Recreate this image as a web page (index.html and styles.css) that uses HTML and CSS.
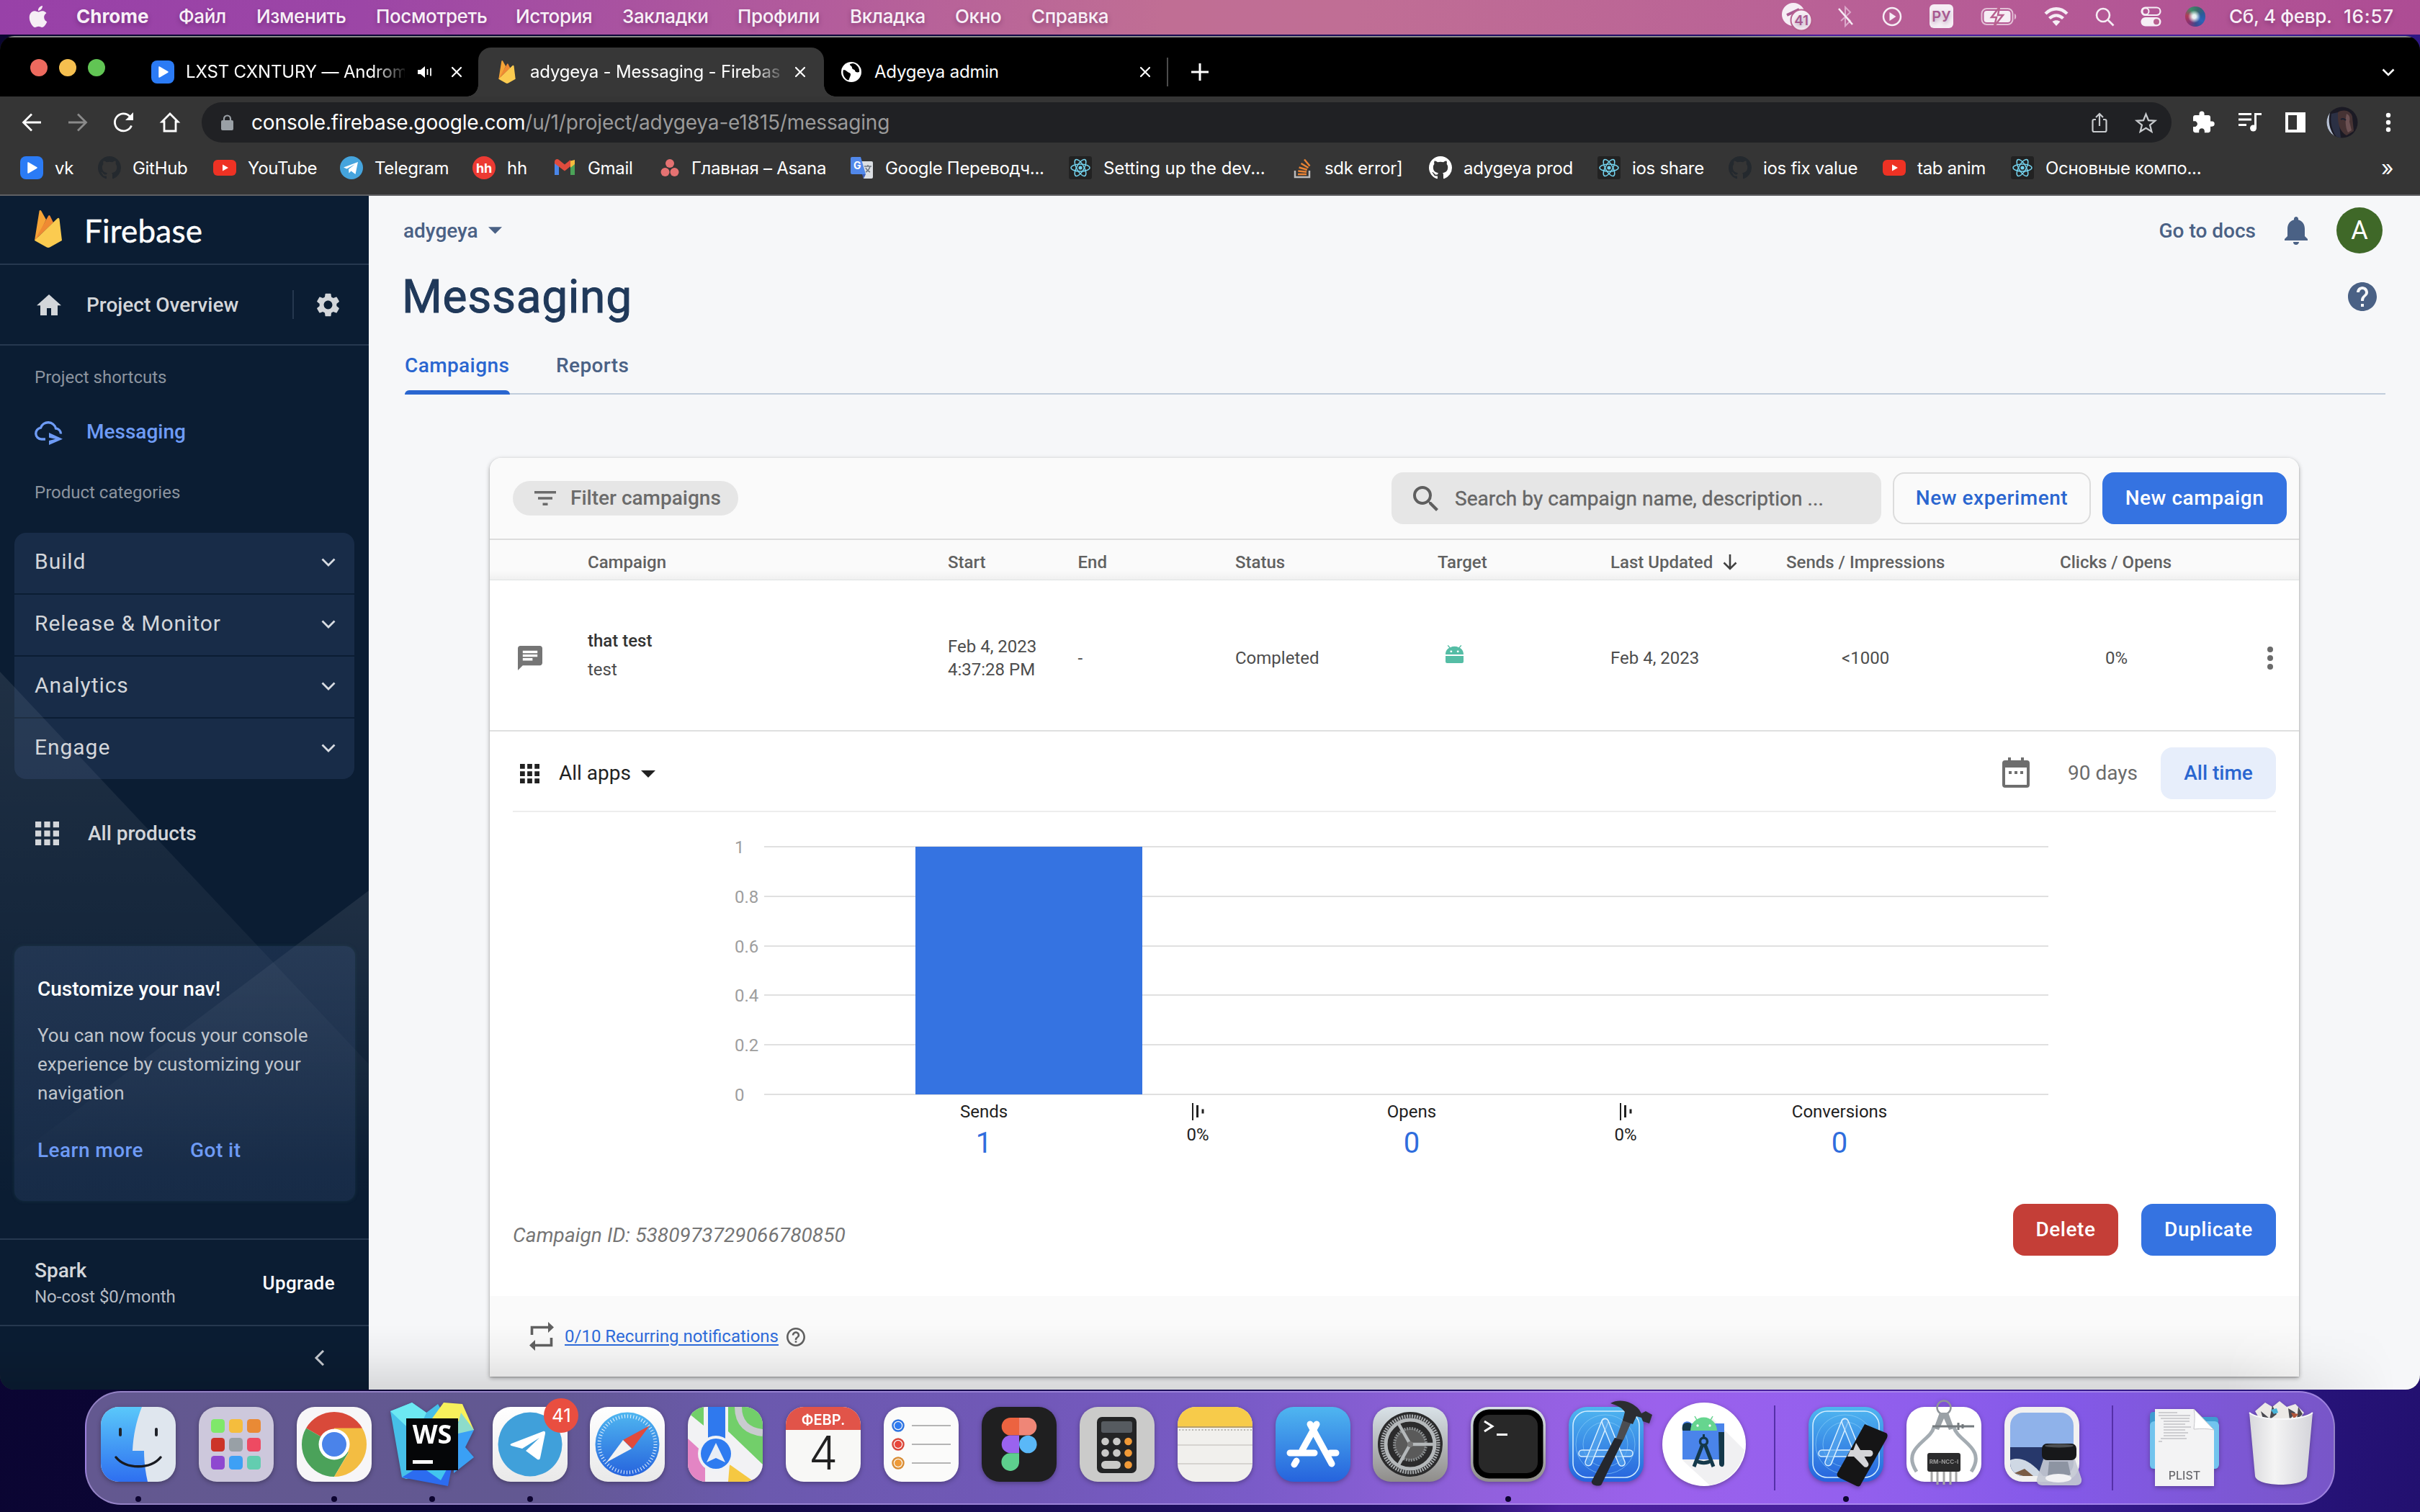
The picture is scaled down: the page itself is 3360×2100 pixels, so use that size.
FILE: index.html
```html
<!DOCTYPE html>
<html lang="ru">
<head>
<meta charset="utf-8">
<title>adygeya - Messaging - Firebase</title>
<link rel="stylesheet" href="styles.css">
</head>
<body>
<svg class="defs" aria-hidden="true">
  <defs>
    <symbol id="i-github" viewBox="0 0 16 16"><path d="M8 0C3.58 0 0 3.58 0 8c0 3.54 2.29 6.53 5.47 7.59.4.07.55-.17.55-.38 0-.19-.01-.82-.01-1.49-2.01.37-2.53-.49-2.69-.94-.09-.23-.48-.94-.82-1.13-.28-.15-.68-.52-.01-.53.63-.01 1.08.58 1.23.82.72 1.21 1.87.87 2.33.66.07-.52.28-.87.51-1.07-1.78-.2-3.64-.89-3.64-3.95 0-.87.31-1.59.82-2.15-.08-.2-.36-1.02.08-2.12 0 0 .67-.21 2.2.82.64-.18 1.32-.27 2-.27s1.36.09 2 .27c1.53-1.04 2.2-.82 2.2-.82.44 1.1.16 1.92.08 2.12.51.56.82 1.27.82 2.15 0 3.07-1.87 3.75-3.65 3.95.29.25.54.73.54 1.48 0 1.07-.01 1.93-.01 2.2 0 .21.15.46.55.38A8.01 8.01 0 0 0 16 8c0-4.42-3.58-8-8-8z"/></symbol>
    <symbol id="i-vk" viewBox="0 0 32 32"><rect width="32" height="32" rx="8" fill="#2b7bf5"/><path d="M11 9v14l12-7z" fill="#fff" stroke="#fff" stroke-width="1.5" stroke-linejoin="round"/></symbol>
    <symbol id="i-youtube" viewBox="0 0 32 32"><rect y="5" width="32" height="22" rx="6" fill="#ee3224"/><path d="M13 11.500v9l8-4.500z" fill="#fff"/></symbol>
    <symbol id="i-react" viewBox="0 0 32 32"><rect width="32" height="32" rx="3" fill="#222"/><g fill="none" stroke="#74d3ee" stroke-width="1.500"><ellipse cx="16" cy="16" rx="13" ry="5"/><ellipse cx="16" cy="16" rx="13" ry="5" transform="rotate(60 16 16)"/><ellipse cx="16" cy="16" rx="13" ry="5" transform="rotate(120 16 16)"/></g><circle cx="16" cy="16" r="2.600" fill="#74d3ee"/></symbol>
    <symbol id="i-firebase" viewBox="0 0 38 52"><path d="M0 42 6.500 1.500c.3-1.700 2-1.900 2.800-.5L16 13 3 41z" fill="#f6a437"/><path d="M0 42 19 8c.7-1.200 2-1.200 2.600 0L26 17z" fill="#ef8a33"/><path d="M0 42 31.500 11.500c1.300-1.200 2.800-.6 3 1L38 42 21.500 51.200c-1.600.9-3.400.9-5 0z" fill="#fbcb50"/></symbol>
    <symbol id="i-close" viewBox="0 0 16 16"><path d="m2 2 12 12M14 2 2 14" stroke="#fff" stroke-width="2.200" fill="none" stroke-linecap="round"/></symbol>
    <symbol id="i-chev" viewBox="0 0 20 12"><path d="m1.500 1.500 8.500 8.500 8.500-8.500" stroke="#d8dce2" stroke-width="2.800" fill="none"/></symbol>
    <symbol id="i-grid" viewBox="0 0 32 32"><path d="M0 0h8v8H0zm12 0h8v8h-8zm12 0h8v8h-8zM0 12h8v8H0zm12 0h8v8h-8zm12 0h8v8h-8zM0 24h8v8H0zm12 0h8v8h-8zm12 0h8v8h-8z"/></symbol>
    <symbol id="i-funnel" viewBox="0 0 17 24"><path d="M0 0h2v24H0zM6 3h3v17H6zM13.500 8.500h3v6h-3z" fill="#212121"/></symbol>
    <linearGradient id="g-blue" x1="0" y1="0" x2="0" y2="1"><stop offset="0" stop-color="#4fb6f0"/><stop offset="1" stop-color="#2663dd"/></linearGradient>
    <linearGradient id="g-sky" x1="0" y1="0" x2="0" y2="1"><stop offset="0" stop-color="#5ac8fa"/><stop offset="1" stop-color="#2e6ff0"/></linearGradient>
    <linearGradient id="g-white" x1="0" y1="0" x2="0" y2="1"><stop offset="0" stop-color="#fff"/><stop offset="1" stop-color="#e9e9e9"/></linearGradient>
    <linearGradient id="g-gray" x1="0" y1="0" x2="0" y2="1"><stop offset="0" stop-color="#d9e2e8"/><stop offset="1" stop-color="#8f8d8a"/></linearGradient>
    <linearGradient id="g-trash" x1="0" y1="0" x2="1" y2="0"><stop offset="0" stop-color="#d8d8dc"/><stop offset=".4" stop-color="#f4f4f4"/><stop offset="1" stop-color="#d4d4da"/></linearGradient>
    <clipPath id="c-app"><rect width="104" height="104" rx="25"/></clipPath>
    <symbol id="i-xbase" viewBox="0 0 104 104"><rect width="104" height="104" rx="25" fill="url(#g-blue)"/><rect x="6" y="6" width="92" height="92" rx="20" fill="none" stroke="#d3eeff" stroke-width="1.500"/><circle cx="51" cy="52" r="41" fill="none" stroke="#8fd0f8" stroke-width="1" opacity=".6"/><circle cx="51" cy="52" r="31" fill="none" stroke="#8fd0f8" stroke-width="1" opacity=".6"/><g fill="#5aa9ee" fill-opacity=".6" stroke="#d9efff" stroke-width="1.500"><rect x="14" y="60" width="75" height="9" rx="4.500"/><rect x="46" y="16" width="9" height="70" rx="4.500" transform="rotate(22 50 20)"/><rect x="46" y="16" width="9" height="70" rx="4.500" transform="rotate(-22 52 20)"/></g></symbol>
  </defs>
</svg>

<header class="menubar">
  <nav class="menus">
    <svg class="apple" viewBox="0 0 24 24"><path fill="#f6eef5" d="M12.152 6.896c-.948 0-2.415-1.078-3.960-1.040-2.040.027-3.910 1.183-4.961 3.014-2.117 3.675-.546 9.103 1.519 12.090 1.013 1.454 2.208 3.090 3.792 3.039 1.520-.065 2.090-.987 3.935-.987 1.831 0 2.350.987 3.960.948 1.637-.026 2.676-1.480 3.676-2.948 1.156-1.688 1.636-3.325 1.662-3.415-.039-.013-3.182-1.221-3.220-4.857-.026-3.040 2.480-4.494 2.597-4.559-1.429-2.090-3.623-2.324-4.390-2.376-2-.156-3.675 1.090-4.610 1.090zM15.530 3.830c.843-1.012 1.400-2.427 1.245-3.830-1.207.052-2.662.805-3.532 1.818-.780.896-1.454 2.338-1.273 3.714 1.338.104 2.715-.688 3.559-1.701"/></svg>
    <b>Chrome</b><span>Файл</span><span>Изменить</span><span>Посмотреть</span><span>История</span><span>Закладки</span><span>Профили</span><span>Вкладка</span><span>Окно</span><span>Справка</span>
  </nav>
  <div class="status">
    <svg width="42" height="38" viewBox="0 0 42 38"><circle cx="16" cy="16" r="16" fill="#f6eef5"/><path d="M7 17 24 9" stroke="#a85a91" stroke-width="4"/><circle cx="27" cy="24" r="14.500" fill="#f6eef5" stroke="#b8608f" stroke-width="2"/><text x="27" y="31" text-anchor="middle" class="tray">41</text></svg>
    <svg width="22" height="30" viewBox="0 0 22 30" fill="none"><path d="m4 8 13 13-7 7V2l7 7L4 21" stroke="#dba8ca" stroke-width="2"/><path d="m1 4 19 22" stroke="#f6eef5" stroke-width="2.500"/></svg>
    <svg width="28" height="28" viewBox="0 0 28 28"><circle cx="14" cy="14" r="12" fill="none" stroke="#f6eef5" stroke-width="2.500"/><path d="M10.500 8v12l9-6z" fill="#f6eef5"/></svg>
    <svg width="34" height="34" viewBox="0 0 34 34"><rect width="33" height="33" rx="6" fill="#f6eef5"/><text x="16.500" y="24" text-anchor="middle" class="lang">РУ</text></svg>
    <svg width="52" height="26" viewBox="0 0 52 26"><rect x="1.500" y="2" width="43" height="22" rx="7" fill="none" stroke="#e3bfd6" stroke-width="2"/><rect x="4.500" y="5" width="37" height="16" rx="4" fill="#f6eef5"/><path d="M47 9c3 1 3 7 0 8z" fill="#e3bfd6"/><path d="m26 0-11 14h7l-3 12 12-15h-7z" fill="#f6eef5" stroke="#b8608f" stroke-width="2.500"/></svg>
    <svg width="34" height="26" viewBox="0 0 34 26" fill="none" stroke="#f6eef5" stroke-width="4.400"><path d="M2 9c9-9 21-9 30 0M7.500 15.500c6-5.500 13-5.500 19 0"/><path d="m17 26-5.500-6c3-2.500 8-2.500 11 0z" fill="#f6eef5" stroke="none"/></svg>
    <svg width="27" height="27" viewBox="0 0 27 27" fill="none" stroke="#f6eef5" stroke-width="2.600"><circle cx="11" cy="11" r="9"/><path d="m17.500 17.500 8 8"/></svg>
    <svg width="30" height="28" viewBox="0 0 30 28"><rect x="1.500" y="1.500" width="26" height="10.500" rx="5.200" fill="none" stroke="#f6eef5" stroke-width="2.200"/><circle cx="7" cy="6.700" r="4.500" fill="none" stroke="#f6eef5" stroke-width="2"/><rect x=".5" y="15" width="28" height="12.500" rx="6.200" fill="#f6eef5"/><circle cx="22" cy="21.200" r="4" fill="#b8608f"/></svg>
    <span class="siri"></span>
    <span class="date">Сб, 4 февр.</span><span>16:57</span>
  </div>
</header>

<div class="window">
  <div class="tabstrip">
    <div class="lights"><i class="red"></i><i class="yellow"></i><i class="green"></i></div>
    <div class="tab tab-a">
      <svg class="fav"><use href="#i-vk"/></svg><span class="tt">LXST CXNTURY — Androm</span>
      <svg class="spk" viewBox="0 0 20 16"><path d="M0 5h4l6-5v16l-6-5H0z" fill="#fff"/><path d="M13.500 4v8M18 2.500v11" stroke="#fff" stroke-width="1.800"/></svg>
      <svg class="x"><use href="#i-close"/></svg>
    </div>
    <div class="tab tab-b active">
      <svg class="fav"><use href="#i-firebase"/></svg><span class="tt">adygeya - Messaging - Firebas</span>
      <svg class="x"><use href="#i-close"/></svg>
    </div>
    <div class="tab tab-c">
      <svg class="fav" viewBox="0 0 28 28"><circle cx="14" cy="14" r="14" fill="#fff"/><path d="M3 11c4 0 5 3 8 4 3 1 2 4 1 6-1 2-1 4-2 4.500C5 24 1 17 3 11zM12 3c0 3 3 2 3 5s4 2 4 4 3 3 6 2c1-5-3-11-9-12z" fill="#000"/></svg><span class="tt">Adygeya admin</span>
      <svg class="x"><use href="#i-close"/></svg>
    </div>
    <span class="tsep"></span>
    <svg class="plus" viewBox="0 0 26 26"><path d="M13 1v24M1 13h24" stroke="#fff" stroke-width="3"/></svg>
    <svg class="tdown" viewBox="0 0 18 11"><path d="m1.500 1.500 7.500 7.500 7.500-7.500" stroke="#fff" stroke-width="2.600" fill="none"/></svg>
  </div>

  <div class="toolbar">
    <svg width="28" height="26" viewBox="0 0 28 26" fill="none" stroke="#fff" stroke-width="2.800"><path d="M27 13H3M14 1.500 2.500 13 14 24.500"/></svg>
    <svg width="28" height="26" viewBox="0 0 28 26" fill="none" stroke="#8a8a8a" stroke-width="2.800"><path d="M1 13h24M14 1.500 25.500 13 14 24.500"/></svg>
    <svg width="30" height="28" viewBox="0 0 30 28" fill="none"><path d="M25.500 18.500A12 12 0 1 1 23 5.500" stroke="#fff" stroke-width="2.800"/><path d="M28 0v11H17z" fill="#fff"/></svg>
    <svg width="28" height="28" viewBox="0 0 28 28" fill="none" stroke="#fff" stroke-width="2.800"><path d="M14 2 3 13h3v13h16V13h3z"/></svg>
    <div class="omnibox">
      <svg class="lock" viewBox="0 0 18 22"><rect y="8" width="17" height="14" rx="2" fill="#9aa0a6"/><path d="M4 9V6a4.500 4.500 0 0 1 9 0v3" fill="none" stroke="#9aa0a6" stroke-width="2.200"/></svg>
      <span class="url">console.firebase.google.com<em>/u/1/project/adygeya-e1815/messaging</em></span>
      <svg class="share" viewBox="0 0 22 28" fill="none" stroke="#c8cbce" stroke-width="2.200"><path d="M6 10H3.500A2 2 0 0 0 1.500 12v13a2 2 0 0 0 2 2h15a2 2 0 0 0 2-2V12a2 2 0 0 0-2-2H16M11 19V2M6 7l5-5 5 5"/></svg>
      <svg class="star" viewBox="0 0 28 28"><path d="m14 2.500 3.400 8.300 8.900.6-6.900 5.700 2.200 8.700L14 21l-7.600 4.800 2.200-8.700-6.900-5.700 8.900-.6z" fill="none" stroke="#c8cbce" stroke-width="2.200"/></svg>
    </div>
    <svg class="t-puz" viewBox="2 1.500 20.500 21"><path fill="#fff" d="M20.500 11H19V7c0-1.100-.9-2-2-2h-4V3.500a2.500 2.500 0 0 0-5 0V5H4c-1.100 0-1.990.9-1.990 2v3.800H3.500c1.490 0 2.700 1.210 2.700 2.700s-1.210 2.700-2.700 2.700H2V20c0 1.100.9 2 2 2h3.800v-1.500c0-1.490 1.210-2.700 2.700-2.700s2.700 1.210 2.700 2.700V22H17c1.100 0 2-.9 2-2v-4h1.500a2.500 2.500 0 0 0 0-5z"/></svg>
    <svg class="t-list" viewBox="0 0 32 26"><path d="M0 1.500h18M0 9h18M0 16.500h11" stroke="#fff" stroke-width="3"/><path d="M23.500 21V1.500H32" fill="none" stroke="#fff" stroke-width="3"/><circle cx="20.500" cy="21" r="4.500" fill="#fff"/></svg>
    <svg class="t-side" viewBox="0 0 28 28"><path d="M0 0h28v28H0zm4 4v20h12V4z" fill="#fff" fill-rule="evenodd"/></svg>
    <svg class="t-ava" viewBox="0 0 44 44"><defs><clipPath id="c-ava"><circle cx="22" cy="22" r="21.500"/></clipPath></defs><g clip-path="url(#c-ava)"><path d="M0 0h44v44H0z" fill="#1b1a24"/><path d="M5 8C2 20 4 32 12 42L0 44V8z" fill="#b8c2d4"/><path d="M7 10c-2 10 0 22 7 32l6 2L16 8z" fill="#2b3044"/><path d="M16 8c8-5 18-2 20 6l2 20-10 6c-8-4-13-14-12-32z" fill="#463334"/><path d="M28 10c5 2 5 7 4 11l3 12-5 3c-4-8-4-18-2-26z" fill="#6d5254"/><path d="M20 18c3-2 5-1 7 1" stroke="#1c2030" stroke-width="2" fill="none"/></g></svg>
    <svg class="t-dots" viewBox="0 0 8 28" fill="#fff"><circle cx="4" cy="4" r="3.200"/><circle cx="4" cy="14" r="3.200"/><circle cx="4" cy="24" r="3.200"/></svg>
  </div>

  <div class="bookmarks">
    <span><svg><use href="#i-vk"/></svg>vk</span>
    <span><svg fill="#24292e"><use href="#i-github"/></svg>GitHub</span>
    <span><svg><use href="#i-youtube"/></svg>YouTube</span>
    <span><svg viewBox="0 0 32 32"><circle cx="16" cy="16" r="16" fill="#45a4dd"/><path d="M5 15.500 25 8l-3.500 17-6-4.500-3 3-.5-5.500L21 11 9.500 17.500z" fill="#fff"/></svg>Telegram</span>
    <span><svg viewBox="0 0 32 32"><circle cx="16" cy="16" r="16" fill="#ec3a33"/><text x="16" y="22.500" text-anchor="middle" class="hh">hh</text></svg>hh</span>
    <span><svg viewBox="0 0 32 32"><path d="M2 8v18h6V14z" fill="#4a86e8"/><path d="M30 8v18h-6V14z" fill="#4ba358"/><path d="M24 6.500 30 5v6l-6 5z" fill="#f4bb3e"/><path d="M2 8c0-4 4-5 6-3l8 6.500L24 5v9l-8 6.500L2 10z" fill="#df4b3d"/></svg>Gmail</span>
    <span><svg viewBox="0 0 32 32" fill="#e57272"><circle cx="14" cy="10" r="6"/><circle cx="7.500" cy="22" r="6"/><circle cx="20.500" cy="22" r="6"/></svg>Главная – Asana</span>
    <span><svg viewBox="0 0 32 32"><path d="M12 7h17a2 2 0 0 1 2 2v20a2 2 0 0 1-2 2H18z" fill="#dcdfe3"/><path d="M2 1h12l7 24H2a2 2 0 0 1-2-2V3a2 2 0 0 1 2-2z" fill="#5188ea"/><path d="m16 25 5 0-3 6z" fill="#3a5bb5"/><path d="M19 14h10M24 12v2M27 14c-1 4-4 7-6 8M21 16c1 3 4 5 6 6" stroke="#6d7680" stroke-width="1.500" fill="none"/><text x="9" y="18" text-anchor="middle" class="gt">G</text></svg>Google Переводч...</span>
    <span class="setup"><svg><use href="#i-react"/></svg>Setting up the dev...</span>
    <span><svg viewBox="0 0 32 32" fill="none"><path d="M2 20v9h20v-9" stroke="#bcbbbb" stroke-width="2.500"/><g stroke="#e98334" stroke-width="2.500"><path d="M6 25h12M6.300 20.500l11.800 1.200M7.600 15.500l11.200 3.300M10.500 10l10 6M15 4.500l7.500 9"/></g></svg>sdk error]</span>
    <span><svg fill="#fff"><use href="#i-github"/></svg>adygeya prod</span>
    <span><svg><use href="#i-react"/></svg>ios share</span>
    <span><svg fill="#24292e"><use href="#i-github"/></svg>ios fix value</span>
    <span><svg><use href="#i-youtube"/></svg>tab anim</span>
    <span><svg><use href="#i-react"/></svg>Основные компо...</span>
    <span class="more">»</span>
  </div>

  <div class="page">
    <aside class="sidebar">
      <svg class="facets" viewBox="0 0 512 1658" preserveAspectRatio="none"><defs><linearGradient id="g-f1" x1="0" y1="0" x2="0" y2="1"><stop offset="0" stop-color="#fff" stop-opacity=".085"/><stop offset="1" stop-color="#fff" stop-opacity="0"/></linearGradient></defs><path d="M0 661 512 1206V1400H0z" fill="url(#g-f1)"/><path d="M512 965V1350H0z" fill="url(#g-f1)"/></svg>
      <div class="brand"><svg class="flame"><use href="#i-firebase"/></svg><span>Firebase</span></div>
      <div class="overview">
        <svg class="home" viewBox="0 0 34 29"><path d="M17 0 0 15.300h5V29h9V19h6v10h9V15.300h5z" fill="#d3d6da"/></svg>
        <span>Project Overview</span>
        <i></i>
        <svg class="gear" viewBox="2 2 20 20"><path fill="#d3d6da" d="M19.140 12.940c.04-.3.060-.61.060-.94 0-.32-.02-.64-.07-.94l2.030-1.580a.49.49 0 0 0 .12-.61l-1.920-3.320a.488.488 0 0 0-.59-.22l-2.390.96c-.5-.38-1.030-.7-1.620-.94l-.36-2.540a.484.484 0 0 0-.48-.41h-3.840c-.24 0-.43.17-.47.41l-.36 2.540c-.59.24-1.130.57-1.620.94l-2.390-.96c-.22-.08-.47 0-.59.22L2.740 8.870c-.12.21-.08.47.12.61l2.030 1.580c-.05.3-.09.63-.09.94s.02.64.07.94l-2.030 1.580a.49.49 0 0 0-.12.61l1.920 3.320c.12.22.37.29.59.22l2.390-.96c.5.38 1.030.7 1.620.94l.36 2.540c.05.24.24.41.48.41h3.840c.24 0 .44-.17.47-.41l.36-2.540c.59-.24 1.130-.56 1.620-.94l2.390.96c.22.08.47 0 .59-.22l1.920-3.320c.12-.22.070-.47-.12-.61l-2.010-1.580zM12 15.600A3.610 3.610 0 0 1 8.400 12c0-1.980 1.620-3.600 3.600-3.600s3.600 1.620 3.600 3.600-1.620 3.600-3.600 3.600z"/></svg>
      </div>
      <div class="label l1">Project shortcuts</div>
      <div class="shortcut">
        <svg viewBox="0 0 40 34"><path d="M15 25H9.500a8 8 0 0 1-1-15.900A11 11 0 0 1 29.500 10a8 8 0 0 1 7 7.500" fill="none" stroke="#6e9bf5" stroke-width="3.400"/><path d="m20 16 19 8.800L20 33v-6l9-2.200-9-2z" fill="#6e9bf5"/></svg>
        <span>Messaging</span>
      </div>
      <div class="label l2">Product categories</div>
      <div class="group">
        <div>Build<svg><use href="#i-chev"/></svg></div>
        <div>Release &amp; Monitor<svg><use href="#i-chev"/></svg></div>
        <div>Analytics<svg><use href="#i-chev"/></svg></div>
        <div>Engage<svg><use href="#i-chev"/></svg></div>
      </div>
      <div class="allprod"><svg fill="#d3d6da"><use href="#i-grid"/></svg>All products</div>
      <section class="promo">
        <h3>Customize your nav!</h3>
        <p>You can now focus your console experience by customizing your navigation</p>
        <div><a>Learn more</a><a>Got it</a></div>
      </section>
      <div class="plan"><div><b>Spark</b><span>No-cost $0/month</span></div><strong>Upgrade</strong></div>
      <div class="collapse"><svg viewBox="0 0 15 24"><path d="M13 2 3 12l10 10" fill="none" stroke="#c8ccd2" stroke-width="3"/></svg></div>
    </aside>

    <main class="main">
      <div class="top">
        <span class="proj">adygeya</span><svg class="caret" viewBox="0 0 20 10"><path d="M0 0h20L10 10z" fill="#4a6185"/></svg>
        <span class="docs">Go to docs</span>
        <svg class="bell" viewBox="4 2.500 16 19.500"><path fill="#4a6185" d="M12 22c1.100 0 2-.9 2-2h-4a2 2 0 0 0 2 2zm6-6v-5c0-3.070-1.640-5.640-4.500-6.320V4c0-.83-.67-1.500-1.500-1.500s-1.500.67-1.500 1.500v.68C7.630 5.360 6 7.920 6 11v5l-2 2v1h16v-1z"/></svg>
        <span class="avatar">A</span>
      </div>
      <div class="titlerow"><h1>Messaging</h1><svg class="help" viewBox="2 2 20 20"><path fill="#4a6185" d="M12 2C6.480 2 2 6.480 2 12s4.480 10 10 10 10-4.480 10-10S17.520 2 12 2zm1 17h-2v-2h2v2zm2.070-7.750-.9.920C13.450 12.900 13 13.500 13 15h-2v-.5c0-1.100.45-2.100 1.170-2.830l1.240-1.260c.37-.36.59-.86.59-1.410 0-1.100-.9-2-2-2s-2 .9-2 2H8c0-2.210 1.790-4 4-4s4 1.790 4 4c0 .88-.36 1.680-.93 2.250z"/></svg></div>
      <div class="tabs"><span class="on">Campaigns</span><span>Reports</span></div>

      <section class="card">
        <div class="cardbar">
          <span class="chip"><svg viewBox="0 0 30 20" fill="#6b6b6b"><path d="M0 0h30v3.400H0zM5 8.300h20v3.400H5zM11.500 16.600h7V20h-7z"/></svg>Filter campaigns</span>
          <span class="search"><svg viewBox="3 3 17.500 17.500"><path fill="#5f5f5f" d="M15.500 14h-.79l-.28-.27A6.471 6.471 0 0 0 16 9.500 6.500 6.500 0 1 0 9.500 16c1.610 0 3.090-.59 4.230-1.570l.27.28v.79l5 4.990L20.490 19l-4.990-5zm-6 0C7.010 14 5 11.990 5 9.500S7.010 5 9.500 5 14 7.010 14 9.500 11.990 14 9.500 14z"/></svg>Search by campaign name, description ...</span>
          <span class="btn outline">New experiment</span><span class="btn blue">New campaign</span>
        </div>
        <div class="row head">
          <span></span><span>Campaign</span><span>Start</span><span>End</span><span>Status</span><span>Target</span>
          <span class="sorted">Last Updated<svg viewBox="0 0 20 22" fill="none" stroke="#424242" stroke-width="2.600"><path d="M10 0v20M1.500 11.500 10 20l8.500-8.500"/></svg></span>
          <span>Sends / Impressions</span><span>Clicks / Opens</span>
        </div>
        <div class="row item">
          <span class="msg"><svg viewBox="2 2 20 20"><path fill="#757575" d="M20 2H4c-1.100 0-1.990.9-1.990 2L2 22l4-4h14c1.100 0 2-.9 2-2V4c0-1.100-.9-2-2-2zM6 9h12v2H6V9zm8 5H6v-2h8v2zm4-6H6V6h12v2z"/></svg></span>
          <span class="name"><b>that test</b>test</span>
          <span class="when">Feb 4, 2023<br>4:37:28 PM</span>
          <span>-</span><span>Completed</span>
          <span class="android"><svg viewBox="0 0 24 24"><path fill="#55bda5" d="M0 14.500h24V22a2 2 0 0 1-2 2H2a2 2 0 0 1-2-2zM0 12.500C0 8 2 5.300 5 3.700L2.500.8 3.700 0l2.600 3a13 13 0 0 1 11.400 0L20.300 0l1.200.8L19 3.700c3 1.600 5 4.300 5 8.800z"/><circle cx="7.500" cy="8.500" r="1.400" fill="#fff"/><circle cx="16.500" cy="8.500" r="1.400" fill="#fff"/></svg></span>
          <span>Feb 4, 2023</span><span class="imp">&lt;1000</span><span class="clk">0%</span>
          <span class="keb"><svg viewBox="0 0 8 32" fill="#6b6b6b"><circle cx="4" cy="4" r="4"/><circle cx="4" cy="16" r="4"/><circle cx="4" cy="28" r="4"/></svg></span>
        </div>
        <div class="details">
          <div class="apps">
            <svg class="g" fill="#212121"><use href="#i-grid"/></svg><span>All apps</span><svg class="dd" viewBox="0 0 20 10"><path d="M0 0h20L10 10z" fill="#212121"/></svg>
            <svg class="cal" viewBox="0 0 38 42"><path d="M8 0h4v4h14V0h4v4h4a4 4 0 0 1 4 4v30a4 4 0 0 1-4 4H4a4 4 0 0 1-4-4V8a4 4 0 0 1 4-4h4zM4 14v24h30V14zm5 5h4v4H9zm8 0h4v4h-4zm8 0h4v4h-4z" fill="#6e6e6e" fill-rule="evenodd"/></svg>
            <span class="d90">90 days</span><span class="all">All time</span>
          </div>
          <svg class="chart" viewBox="0 0 2448 500">
            <g stroke="#e0e0e0" stroke-width="2"><path d="M349 48h1783M349 117h1783M349 186h1783M349 254h1783M349 323h1783M349 392h1783"/></g>
            <rect x="559" y="48" width="315" height="344" fill="#3573e1"/>
            <g class="axis"><text x="308" y="56.500">1</text><text x="308" y="125.500">0.8</text><text x="308" y="194.500">0.6</text><text x="308" y="262.500">0.4</text><text x="308" y="331.500">0.2</text><text x="308" y="400.500">0</text></g>
            <g class="cat"><text x="654" y="424">Sends</text><text x="1248" y="424">Opens</text><text x="1842" y="424">Conversions</text><text x="951" y="456">0%</text><text x="1545" y="456">0%</text></g>
            <g class="num"><text x="654" y="473">1</text><text x="1248" y="473">0</text><text x="1842" y="473">0</text></g>
            <use href="#i-funnel" x="943" y="404" width="17" height="24"/><use href="#i-funnel" x="1537" y="404" width="17" height="24"/>
          </svg>
          <div class="actions"><i>Campaign ID: 5380973729066780850</i><span class="btn red">Delete</span><span class="btn blue">Duplicate</span></div>
        </div>
        <div class="foot">
          <svg class="rep" viewBox="0 0 34 40" fill="none"><path d="M3.500 18V7.500H28M30.500 22v10.500H6" stroke="#616161" stroke-width="3.600"/><path d="m26 0 8 7.500-8 7.500zM8 25l-8 7.500L8 40z" fill="#616161"/></svg>
          <u>0/10 Recurring notifications</u>
          <svg class="q" viewBox="2 2 20 20"><path fill="#616161" d="M11 18h2v-2h-2v2zm1-16C6.480 2 2 6.480 2 12s4.480 10 10 10 10-4.480 10-10S17.520 2 12 2zm0 18c-4.410 0-8-3.590-8-8s3.590-8 8-8 8 3.590 8 8-3.590 8-8 8zm0-14c-2.210 0-4 1.790-4 4h2c0-1.100.9-2 2-2s2 .9 2 2c0 2-3 1.750-3 5h2c0-2.250 3-2.500 3-5 0-2.210-1.790-4-4-4z"/></svg>
        </div>
      </section>
    </main>
  </div>
  <div class="shade"></div>
</div>

<footer class="dock">
  <div class="slot run"><svg viewBox="0 0 104 104"><g clip-path="url(#c-app)"><path d="M0 0h104v104H0z" fill="#dfe6ee"/><path d="M0 0h57c-8 20-12 40-13 61h16c0 15 2 30 5 43H0z" fill="url(#g-sky)"/></g><path d="M27 31v8M77 31v8" stroke="#20232a" stroke-width="4" stroke-linecap="round"/><path d="M21 70c14 17 48 17 62 0" stroke="#181a20" stroke-width="3.500" fill="none" stroke-linecap="round"/></svg></div>
  <div class="slot"><svg viewBox="0 0 104 104"><rect width="104" height="104" rx="25" fill="#cdc8dc"/><g><rect x="17" y="17" width="19" height="19" rx="4.500" fill="#7fe86a"/><rect x="42" y="17" width="19" height="19" rx="4.500" fill="#f5bd3d"/><rect x="67" y="17" width="19" height="19" rx="4.500" fill="#e98a35"/><rect x="17" y="43" width="19" height="19" rx="4.500" fill="#cc3328"/><rect x="42" y="43" width="19" height="19" rx="4.500" fill="#98a0a6"/><rect x="67" y="43" width="19" height="19" rx="4.500" fill="#ee4a62"/><rect x="17" y="68" width="19" height="19" rx="4.500" fill="#8e48d0"/><rect x="42" y="68" width="19" height="19" rx="4.500" fill="#3da0f5"/><rect x="67" y="68" width="19" height="19" rx="4.500" fill="#63cdb0"/></g></svg></div>
  <div class="slot run"><svg viewBox="0 0 104 104"><rect width="104" height="104" rx="25" fill="#f7f6f8"/><path d="M52 52 13 29.500A45 45 0 0 1 91 29.500z" fill="#d9493a"/><path d="M52 52 13 29.500A45 45 0 0 0 52 97L72 63z" fill="#4ba25a"/><path d="M52 52l20 11.500L52 97a45 45 0 0 0 39-67.500H52z" fill="#f3bd42"/><circle cx="52" cy="52" r="21.500" fill="#fff"/><circle cx="52" cy="52" r="17" fill="#4a83ea"/></svg></div>
  <div class="slot run"><svg viewBox="0 0 104 104"><path d="M-6 6 24-6 44 8 60-4 74 20 70 90 16 100 10 98z" fill="#46bfe8"/><path d="M24-6 44 8 30 40-6 6z" fill="#6ce8f2"/><path d="M68-6 94-4l16 36-60 12L52 16z" fill="#f7f05c"/><path d="m84 18 26 14-12 24 12 14-28 22V40z" fill="#3aa0f5"/><path d="m92 8 18 24-26 6z" fill="#8ddccb"/><path d="M10 98 32 84l50-14-8 40z" fill="#2c6cf0"/><path d="m44 88 34-12-14 26z" fill="#42c5ee"/><path d="M16 16h72v72H16z" fill="#050608"/><text x="52" y="51" text-anchor="middle" class="ws">WS</text><path d="M25 74h28v5H25z" fill="#fff"/></svg></div>
  <div class="slot run"><svg viewBox="0 0 104 104"><rect width="104" height="104" rx="25" fill="url(#g-white)"/><circle cx="52" cy="52" r="44.500" fill="#40a0da"/><path d="M26 51 70 34c2-.8 3.500.4 3 3l-7 34c-.5 2.500-2.500 3-4.500 1.500L46 61 65 43 41 58 26 54c-2-.7-2-2.200 0-3z" fill="#fff"/></svg><b class="badge">41</b></div>
  <div class="slot"><svg viewBox="0 0 104 104"><rect width="104" height="104" rx="25" fill="url(#g-white)"/><circle cx="52" cy="52" r="44.500" fill="url(#g-blue)"/><circle cx="52" cy="52" r="39" fill="none" stroke="#e9f4fd" stroke-width="5" stroke-dasharray="1 3.080"/><path d="M83 26 59 58 46 46z" fill="#e04a3c"/><path d="M23 77 46 46l12 12z" fill="#f3f3f3"/></svg></div>
  <div class="slot"><svg viewBox="0 0 104 104"><g clip-path="url(#c-app)"><path d="M0 0h104v104H0z" fill="#f2f2f4"/><path d="M0 0h22v26L0 8zM56 0h48v80L56 34z" fill="#72cf6a"/><path d="M0 44l24 22v38H0z" fill="#e385c4"/><path d="M58 80l34 24H56z" fill="#f5c842"/><path d="M28 0h24v60H28z" fill="#2f79ee"/><path d="M70 0c0 24 14 34 34 36" fill="none" stroke="#c9cbcf" stroke-width="10"/></g><circle cx="39" cy="65" r="25" fill="#f0f2f6"/><circle cx="39" cy="65" r="21" fill="#2e7bf0"/><path d="M39 50 52 77l-13-6-13 6z" fill="#e8eef6"/></svg></div>
  <div class="slot"><svg viewBox="0 0 104 104"><g clip-path="url(#c-app)"><path d="M0 0h104v104H0z" fill="#f8f8f6"/><path d="M0 0h104v32H0z" fill="#e15449"/></g><text x="52" y="25" text-anchor="middle" class="cal-m">ФЕВР.</text><text x="52" y="87" text-anchor="middle" class="cal-d">4</text></svg></div>
  <div class="slot"><svg viewBox="0 0 104 104"><rect width="104" height="104" rx="25" fill="#fbfbfa"/><g fill="none" stroke-width="2.500"><circle cx="20" cy="26" r="7.500" stroke="#2f74e0"/><circle cx="20" cy="52" r="7.500" stroke="#d9473a"/><circle cx="20" cy="78" r="7.500" stroke="#d98d35"/></g><circle cx="20" cy="26" r="5" fill="#2f7bf0"/><circle cx="20" cy="52" r="5" fill="#e8463a"/><circle cx="20" cy="78" r="5" fill="#ee9a38"/><path d="M39 26h54M39 52h54M39 78h54" stroke="#b4b4b4" stroke-width="2"/></svg></div>
  <div class="slot"><svg viewBox="0 0 104 104"><rect width="104" height="104" rx="25" fill="#1f1f20"/><path d="M52 15H40a12.300 12.300 0 0 0 0 24.600h12z" fill="#ec6340"/><path d="M52 15h12a12.300 12.300 0 0 1 0 24.600H52z" fill="#ef8677"/><path d="M52 39.600H40a12.300 12.300 0 0 0 0 24.600h12z" fill="#9a63ef"/><circle cx="64.300" cy="52" r="12.300" fill="#5ab8f8"/><path d="M52 64.300H40A12.300 12.300 0 1 0 52 77z" fill="#5dcf8d"/></svg></div>
  <div class="slot"><svg viewBox="0 0 104 104"><rect width="104" height="104" rx="25" fill="#cbcbca"/><rect x="24" y="14" width="55" height="78" rx="7" fill="#232425"/><rect x="30" y="20" width="43" height="16" rx="3" fill="#565b60"/><g fill="#c9c9c7"><circle cx="35.500" cy="48" r="5.300"/><circle cx="51.500" cy="48" r="5.300"/><circle cx="35.500" cy="64" r="5.300"/><circle cx="51.500" cy="64" r="5.300"/><rect x="30" y="75" width="27" height="11" rx="5.500"/></g><g fill="#f19a37"><circle cx="67.500" cy="48" r="5.300"/><circle cx="67.500" cy="64" r="5.300"/><circle cx="67.500" cy="80.500" r="5.300"/></g></svg></div>
  <div class="slot"><svg viewBox="0 0 104 104"><g clip-path="url(#c-app)"><path d="M0 0h104v104H0z" fill="#f1f0ed"/><path d="M0 0h104v27H0z" fill="#f7cb4a"/><path d="M0 27h104v2H0z" fill="#b8a06a"/><path d="M2 32h102" stroke="#b8b6b0" stroke-width="2" stroke-dasharray="2 2.500"/><path d="M0 53h104M0 79h104" stroke="#d6d4d0" stroke-width="2"/></g></svg></div>
  <div class="slot"><svg viewBox="0 0 104 104"><rect width="104" height="104" rx="25" fill="url(#g-blue)"/><g stroke="#fff" stroke-width="9" stroke-linecap="round"><path d="M20 64h34M76 64h8M57 24 37 60M48 24l30 55M29 75l-3 5"/></g></svg></div>
  <div class="slot"><svg viewBox="0 0 104 104"><rect width="104" height="104" rx="25" fill="url(#g-gray)"/><circle cx="52" cy="52" r="45" fill="#2b2b2c"/><circle cx="52" cy="52" r="39" fill="none" stroke="#a9adb0" stroke-width="5" stroke-dasharray="2 1.500"/><circle cx="52" cy="52" r="34" fill="none" stroke="#b4b8ba" stroke-width="5"/><circle cx="52" cy="52" r="22" fill="#5a5a5a" stroke="#8c9092" stroke-width="4" stroke-dasharray="2 1.500"/><path d="M52 52h34M52 52 35 22M52 52 35 82" stroke="#b4b8ba" stroke-width="4.500"/><circle cx="52" cy="52" r="4" fill="#777"/></svg></div>
  <div class="slot run"><svg viewBox="0 0 104 104"><rect width="104" height="104" rx="25" fill="url(#g-gray)"/><rect x="3.500" y="3.500" width="97" height="96" rx="22" fill="#000"/><rect x="11" y="11" width="82" height="81" rx="15" fill="#282828"/><path d="m19 20 11 7-11 7" fill="none" stroke="#fff" stroke-width="3"/><path d="M36 38.500h15" stroke="#fff" stroke-width="3"/></svg></div>
  <div class="slot"><svg viewBox="0 0 104 104"><use href="#i-xbase" width="104" height="104"/><path d="M64 43 76 45 46 107c-2 5-16 2-14-4z" fill="#24272e"/><path d="M66 44 78 10l12 4-14 32z" fill="#4b4d52"/><path d="M58-5c12-7 30-3 40 9l3 5 6-3 9 5-4 12-9-3-2-5-7-2-5 11-14-5 3-12c-4-6-11-9-20-12z" fill="#2b2d31"/></svg></div>
  <div class="slot"><svg viewBox="0 0 104 104"><circle cx="52" cy="52" r="58" fill="#fff"/><path d="M62 14 108 60A58 58 0 0 1 60 109L22 74z" fill="#f0f0f2"/><path d="M22 27c0-8 10-8 12-4h46v50H22z" fill="#4a84ea"/><path d="M22 33c-2-10 4-13 12-10v10z" fill="#14384a"/><path d="M72 35h8v44c0 6-7 5-7 0z" fill="#14384a"/><path d="M33 33a18.500 18.500 0 0 1 37 0z" fill="#66d58f"/><path d="m39 13 4 7M64 13l-4 7" stroke="#66d58f" stroke-width="1.500"/><circle cx="43" cy="26" r="1.700" fill="#fff"/><circle cx="60" cy="26" r="1.700" fill="#fff"/><path d="M50 52 38 83M53 52l12 31M40 74c7 5 16 5 23 0" stroke="#14384a" stroke-width="5" fill="none"/><circle cx="51.500" cy="48" r="5" fill="none" stroke="#14384a" stroke-width="3.500"/><path d="M51.500 38v6" stroke="#14384a" stroke-width="3"/></svg></div>
  <i class="div"></i>
  <div class="slot run"><svg viewBox="0 0 104 104"><use href="#i-xbase" width="104" height="104"/><path d="M78 24 107 36c3 1 3 4 2 7L73 107c-1 3-3 4-6 3L42 98c-2-1-3-4-2-6z" fill="#151516"/><path d="m66 50 17 28c2 5-4 8-7 4L60 66z" fill="#d5d5d8"/><path d="M58 60h27a4.500 4.500 0 0 1 0 9H54z" fill="#d5d5d8"/></svg></div>
  <div class="slot"><svg viewBox="0 0 104 104"><rect width="104" height="104" rx="25" fill="#fff"/><circle cx="52" cy="1" r="9.500" fill="none" stroke="#8e9498" stroke-width="2.500"/><path d="M46 8h12l8 22-7 2-7-16-7 16-7-2z" fill="#9aa1a6"/><path d="M38 28C34 48-8 56 14 90M66 28c4 20 46 28 24 62" fill="none" stroke="#a4acb2" stroke-width="5"/><path d="M36 27h58M72 22v10M78 24v6" stroke="#747a7e" stroke-width="3"/><rect x="29" y="64" width="46" height="26" rx="3" fill="#2b2b2c"/><text x="52" y="79" text-anchor="middle" class="chip-t">RM-NCC-I</text><path d="M35 90v14M43 90v18M52 90v18M61 90v18M69 90v14" stroke="#a5a5a5" stroke-width="3"/></svg></div>
  <div class="slot"><svg viewBox="0 0 104 104"><rect width="104" height="104" rx="25" fill="#f2f1f0"/><g><rect x="8" y="8" width="88" height="88" rx="18" fill="#8fb2ea"/><path d="M8 56h88v22a18 18 0 0 1-18 18H26A18 18 0 0 1 8 78z" fill="#27386b"/><path d="M8 74c14-6 30 2 46 22H26A18 18 0 0 1 8 78z" fill="#cfd8e4"/><path d="M14 92l14-6 12 10H26z" fill="#7a5c45"/></g><path d="M55 70h42l10 30c1 6-3 9-8 9H53c-6 0-9-4-8-9z" fill="#c4c9d4" fill-opacity=".92"/><path d="M62 76h26l4 18-16 6-16-4z" fill="#8d94a2"/><ellipse cx="75" cy="99" rx="18" ry="6" fill="#f2f2f4"/><rect x="52" y="51" width="48" height="23" rx="7" fill="#17181a"/><ellipse cx="76" cy="54" rx="20" ry="2.500" fill="#4d4f52"/></svg></div>
  <i class="div"></i>
  <div class="slot"><svg viewBox="0 0 104 104"><path d="M5 12q0-5 5-5h20l5 7h60q5 0 5 5v62q0 5-5 5H10q-5 0-5-5z" fill="#3f9bd0"/><rect x="5" y="20" width="96" height="66" rx="6" fill="#72c4ee"/><path d="M12 3h54l28 29v78H12z" fill="#f3f3f4"/><path d="M66 3c2 8 1 18 0 28 10-1 20-1 28 1z" fill="#fff" stroke="#c6c6ca" stroke-width="1"/><path d="M17 8h26M17 12h44M20 16h40M24 20h36M24 24h30M24 28h38M24 32h30M24 36h34M24 40h30M20 44h36M17 48h5" stroke="#a9a9ad" stroke-width="1.200"/><text x="53" y="101" text-anchor="middle" class="pl">PLIST</text></svg></div>
  <div class="slot"><svg viewBox="0 0 104 104"><path d="M16 6 30-6l10 6 10-8 10 8 12-4 12 12-8 12H24z" fill="#ece9e6"/><path d="M24 6l12 10-8 4zM40-2l6 12-10 8zM62 2l10 6-8 10zM76 0l6 10-8 8z" fill="#4a4a50"/><path d="M38 4l8-2 2 6-6 2z" fill="#48b4d8"/><path d="M66 8l10 2-6 7z" fill="#b2553a"/><path d="M8 8c14 12 74 12 88 0l-8 88c-2 16-70 16-72 0z" fill="url(#g-trash)"/><path d="M8 8c14 12 74 12 88 0" fill="none" stroke="#f8f8fa" stroke-width="2"/></svg></div>
</footer>
</body>
</html>
```
FILE: styles.css
```css
* { box-sizing: border-box; }
body {
  margin: 0; width: 3360px; height: 2100px; overflow: hidden;
  display: flex; flex-direction: column;
  font-family: Roboto, "Liberation Sans", sans-serif;
  background: linear-gradient(100deg, #0a0530 0%, #0d0638 30%, #1c0e5c 52%, #23116a 64%, #4c1f9f 68%, #45209c 82%, #2a1580 92%, #22106f 100%);
}
svg { display: block; flex: none; overflow: visible; }
.defs { position: absolute; width: 0; height: 0; }

/* macOS menu bar */
.menubar {
  height: 48px; flex: none; display: flex; align-items: center; padding: 0 0 2px 38px; color: #f8f0f7;
  font: 500 26px/46px Inter, "Liberation Sans", sans-serif; letter-spacing: -.35px;
  text-shadow: 0 3px 6px rgba(60,0,60,.35);
  background: linear-gradient(95deg, #9841a8 0%, #9c46a6 15%, #b25b9c 33%, #c06e94 48%, #c06e95 56%, #b85f96 78%, #ad4c94 100%);
}
.menus { display: grid; grid-template-columns: 68px 142px 108px 166px 194px 148px 160px 156px 146px 106px 110px; align-items: center; white-space: nowrap; }
.apple { width: 30px; height: 32px; }
.menus b { font-weight: 700; letter-spacing: 0; }
.status { margin-left: auto; display: grid; grid-template-columns: 78px 61px 66px 71px 88px 71px 63px 62px 61px 159px 106px; align-items: center; white-space: nowrap; }
.tray { font: 600 19px Inter, sans-serif; fill: #a85a91; }
.lang { font: 600 20px Inter, sans-serif; fill: #a85a91; letter-spacing: 0; }
.siri { width: 28px; height: 28px; border-radius: 50%; background: radial-gradient(circle at 45% 50%, rgba(240,250,250,.95) 0 12%, rgba(200,230,235,0) 42%), conic-gradient(from 20deg, #3a6a6a, #2c5b9a, #2c63b8, #3a4a90, #8a3270, #b03a58, #3f8a6a, #3a6a6a); }
.date { letter-spacing: -.3px; }
.date + span { letter-spacing: .8px; }

/* browser window */
.window { position: relative; flex: none; margin-top: 2px; height: 1880px; border-radius: 20px; overflow: hidden; background: #353535; display: flex; flex-direction: column; font-family: Inter, "Liberation Sans", sans-serif; color: #fff; }
.tabstrip { height: 84px; flex: none; background: #000; box-shadow: inset 0 2px 0 #8c8c8c; display: flex; align-items: center; padding: 16px 0 0 42px; font-size: 24px; }
.lights { display: flex; gap: 16px; width: 168px; margin-top: -13px; }
.lights i { width: 24px; height: 24px; border-radius: 50%; }
.red { background: #ed6a5e; } .yellow { background: #f5bf4f; } .green { background: #61c554; }
.tab { display: flex; align-items: center; height: 68px; flex: none; }
.fav { width: 32px; height: 32px; }
.tt { white-space: nowrap; margin-left: 18px; line-height: 36px; }
.x { width: 16px; height: 16px; }
.tab-a { width: 454px; }
.tab-a .tt { margin-left: 16px; width: 304px; letter-spacing: -.15px; mask-image: linear-gradient(90deg, #000 85%, transparent 102%); }
.spk { width: 20px; height: 16px; margin: 0 26px 0 18px; }
.active { position: relative; width: 480px; background: #373737; border-radius: 18px 18px 0 0; padding-left: 24px; }
.active .tt { margin-left: 16px; width: 350px; letter-spacing: -.2px; mask-image: linear-gradient(90deg, #000 88%, transparent 102%); }
.active .x { margin-left: 17px; }
.active::before, .active::after { content: ""; position: absolute; bottom: 0; width: 16px; height: 16px; }
.active::before { left: -16px; background: radial-gradient(circle at 0 0, transparent 15.5px, #373737 16px); }
.active::after { right: -16px; background: radial-gradient(circle at 100% 0, transparent 15.5px, #373737 16px); }
.tab-c { padding-left: 24px; width: 456px; }
.tab-c .fav { width: 28px; height: 28px; }
.tab-c .tt { letter-spacing: -.2px; flex: 1; }
.tsep { width: 2px; height: 40px; background: #4c4c4c; margin-left: 20px; }
.tab-c .x { margin-right: 2px; }
.plus { width: 26px; height: 26px; margin-left: 31px; }
.tdown { width: 18px; height: 11px; margin: 0 35px 0 auto; }

.toolbar { height: 72px; flex: none; display: flex; align-items: center; padding-left: 30px; }
.toolbar > svg:nth-child(2) { margin-left: 36px; }
.toolbar > svg:nth-child(3) { margin-left: 35px; }
.toolbar > svg:nth-child(4) { margin-left: 35px; }
.omnibox { margin-left: 30px; width: 2735px; height: 56px; border-radius: 28px; background: #202124; display: flex; align-items: center; padding-left: 27px; font-size: 28px; letter-spacing: -.15px; }
.lock { width: 18px; height: 22px; margin-right: 24px; }
.url em { font-style: normal; color: #9a9a9a; }
.share { width: 22px; height: 28px; margin-left: auto; }
.star { width: 29px; height: 29px; margin: 0 21px 0 39px; }
.t-puz { width: 29px; height: 30px; margin-left: 30px; }
.t-list { width: 32px; height: 26px; margin-left: 34px; }
.t-side { width: 28px; height: 28px; margin-left: 33px; }
.t-ava { width: 44px; height: 44px; margin-left: 29px; }
.t-dots { width: 8px; height: 28px; margin-left: 38px; }

.bookmarks { height: 66px; flex: none; padding: 0 0 10px 28px; border-bottom: 2px solid #5f6063; display: grid; align-items: center; white-space: nowrap;
  grid-template-columns: 108px 160px 176px 184px 112px 148px 265px 303px 312px 188px 234px 182px 214px 178px 514px 54px; font-size: 24px; letter-spacing: -.3px; }
.bookmarks span { display: flex; align-items: center; }
.bookmarks svg { width: 32px; height: 32px; margin-right: 16px; }
.bookmarks span:nth-child(7) svg { margin-right: 12px; }
.bookmarks span:nth-child(10) svg { margin-right: 11px; }
.bookmarks .setup { letter-spacing: -.05px; }
.hh { font: 700 18px Inter, sans-serif; fill: #fff; }
.gt { font: 700 14px Inter, sans-serif; fill: #fff; }
.more { font-size: 30px; }

.page { flex: 1; display: flex; font-family: Roboto, "Liberation Sans", sans-serif; min-height: 0; }

/* sidebar */
.sidebar { position: relative; width: 512px; flex: none; background: #0b1d33; color: #d3d6da; display: flex; flex-direction: column; font-size: 28px; font-weight: 500; }
.sidebar > * { position: relative; }
.sidebar > .facets { position: absolute; left: 0; top: 0; width: 512px; height: 1658px; }
.brand { height: 96px; flex: none; border-bottom: 2px solid #26384f; display: flex; align-items: center; padding: 0 0 2px 48px; font: 400 44px Lato, sans-serif; color: #fff; letter-spacing: .2px; -webkit-text-stroke: .4px #fff; }
.brand span { padding-top: 3px; }
.flame { width: 38px; height: 52px; margin-right: 31px; stroke: none; }
.overview { height: 112px; flex: none; border-bottom: 2px solid #26384f; display: flex; align-items: center; padding-left: 51px; }
.home { width: 34px; height: 29px; margin-right: 35px; }
.overview i { width: 2px; height: 40px; background: #26384f; margin-left: auto; }
.gear { width: 33px; height: 33px; margin: 0 40px 0 31px; }
.label { flex: none; padding-left: 48px; font-size: 24px; font-weight: 400; color: #8c949f; display: flex; align-items: center; }
.l1 { height: 88px; }
.shortcut { height: 62px; display: flex; align-items: center; padding-left: 48px; color: #6e9bf5; flex: none; }
.shortcut svg { width: 40px; height: 34px; margin: 5px 32px 0 0; }
.l2 { height: 108px; }
.group { margin: 2px 20px 0; width: 472px; border-radius: 16px; overflow: hidden; display: grid; gap: 2px; grid-auto-rows: 84px; flex: none; }
.group div { background: rgba(90,120,175,.17); display: flex; align-items: center; padding: 0 26px 6px 28px; font-size: 30px; font-weight: 400; letter-spacing: .95px; }
.group svg { width: 20px; height: 12px; margin-left: auto; margin-top: 4px; }
.allprod { height: 152px; flex: none; display: flex; align-items: center; padding: 0 0 2px 49px; }
.allprod svg { width: 33px; height: 33px; margin-right: 40px; }
.promo { margin: 80px 20px 0; width: 473px; height: 354px; flex: none; border-radius: 14px; background: linear-gradient(180deg, rgba(85,115,170,.2), rgba(75,105,160,.18)); box-shadow: 0 0 5px rgba(40,80,90,.4); padding: 40px 32px; }
.promo h3 { margin: 0; font: 500 28px/40px Roboto; color: #fff; }
.promo p { margin: 24px 0 0; font: 400 26px/40px Roboto; color: #bfc4cb; letter-spacing: .07px; }
.promo div { display: flex; gap: 65px; margin-top: 40px; line-height: 40px; color: #6e9bf5; letter-spacing: .45px; }
.plan { margin-top: auto; height: 122px; flex: none; border-top: 2px solid #26384f; border-bottom: 2px solid #26384f; display: flex; align-items: center; justify-content: space-between; padding: 2px 47px 0 48px; }
.plan div { display: flex; flex-direction: column; }
.plan b { font: 500 28px/38px Roboto; }
.plan span { font: 400 24px/34px Roboto; color: #b5bac2; }
.plan strong { font: 500 26px/30px Roboto; color: #fff; letter-spacing: .4px; }
.collapse { height: 88px; flex: none; display: flex; align-items: center; justify-content: flex-end; padding-right: 61px; }
.collapse svg { width: 15px; height: 24px; }

/* content */
.main { flex: 1; background: #f6f7f9; color: #4a6185; padding: 16px 0 0 50px; font-size: 28px; font-weight: 500; }
.top { height: 64px; display: flex; align-items: center; padding-right: 52px; }
.proj { margin-left: -2px; }
.caret { width: 19px; height: 10px; margin-left: 14px; }
.docs { margin: 0 40px 0 auto; }
.bell { width: 32px; height: 39px; margin-right: 40px; }
.avatar { width: 64px; height: 64px; border-radius: 50%; background: #3f6828; color: #fff; font: 400 36px/64px Roboto; text-align: center; }
.titlerow { height: 120px; display: flex; align-items: center; justify-content: space-between; padding-right: 60px; }
.titlerow h1 { margin: 2px 0 0 -4px; font: 400 64px/80px Roboto; color: #20395a; letter-spacing: .7px; -webkit-text-stroke: 1px #20395a; }
.help { width: 40px; height: 40px; }
.tabs { height: 76px; width: 2750px; border-bottom: 2px solid #c1cddc; display: flex; gap: 64px; line-height: 72px; letter-spacing: .4px; }
.tabs .on { position: relative; color: #2a66d0; height: 76px; width: 146px; }
.tabs .on::after { content: ""; position: absolute; left: 0; right: 0; bottom: 0; height: 6px; border-radius: 6px 6px 0 0; background: #2a66d0; }

.card { margin: 88px 0 0 118px; width: 2512px; height: 1276px; border-radius: 16px 16px 0 0; background: #fff; box-shadow: 0 2px 6px rgba(0,0,0,.32), 0 1px 2px rgba(0,0,0,.2); display: flex; flex-direction: column; overflow: hidden; }
.cardbar { height: 114px; flex: none; background: #fafafa; border-bottom: 2px solid #dcdcdc; display: flex; align-items: center; padding: 0 17px 0 32px; }
.chip { width: 313px; height: 48px; border-radius: 24px; background: #e6e6e6; color: #6b6b6b; display: flex; align-items: center; padding: 0 0 1px 30px; }
.chip svg { width: 30px; height: 20px; margin: 1px 20px 0 0; }
.search { margin-left: auto; width: 680px; height: 72px; border-radius: 16px; background: #e6e6e6; color: #666; font-weight: 400; display: flex; align-items: center; padding-left: 30px; white-space: nowrap; letter-spacing: .05px; -webkit-text-stroke: .4px #666; }
.search svg { width: 35px; height: 35px; margin-right: 23px; stroke: none; }
.btn { height: 72px; border-radius: 16px; display: flex; align-items: center; justify-content: center; letter-spacing: .55px; padding-bottom: 2px; flex: none; }
.outline { width: 275px; border: 2px solid #dcdcdc; color: #2a66d0; margin-left: 16px; }
.blue { background: #3573e1; color: #fff; }
.cardbar .blue { width: 256px; margin-left: 16px; }
.red.btn { background: #c43e37; color: #fff; width: 146px; }
.row { display: grid; grid-template-columns: 136px 500px 180.500px 218.500px 281px 240px 244px 380px 288px 1fr; align-items: center; font-size: 24px; flex: none; }
.head { height: 56px; color: #616161; background: linear-gradient(180deg, #fafafa 78%, #f0f0f0 100%); border-bottom: 1px solid #dfe3e3; padding-top: 6px; }
.sorted { display: flex; align-items: center; }
.sorted svg { width: 20px; height: 22px; margin-left: 14px; }
.item { height: 210px; border-bottom: 2px solid #dfe0e0; font-weight: 400; color: #4d4d4d; }
.item > span { padding-top: 8px; }
.item .msg { padding: 8px 0 0 39px; }
.msg svg { width: 34px; height: 34px; }
.item .name { line-height: 40px; padding-top: 0; }
.name b { display: block; font-weight: 500; color: #333; }
.when { line-height: 32px; }
.item .android { padding: 0 0 4px 11px; }
.android svg { width: 25px; height: 25px; }
.item .imp { padding-left: 77px; }
.item .clk { padding-left: 63px; }
.keb svg { width: 8px; height: 32px; }
.details { padding: 22px 32px 0; height: 784px; flex: none; }
.apps { height: 90px; border-bottom: 2px solid #ededed; display: flex; align-items: flex-start; line-height: 72px; color: #212121; font-weight: 400; }
.apps .g { width: 27px; height: 27px; margin: 23px 27px 0 10px; }
.dd { width: 20px; height: 10px; margin: 32px 0 0 14px; }
.cal { width: 38px; height: 42px; margin: 14px 0 0 auto; }
.d90 { color: #6b6b6b; margin: 0 32px 0 53px; }
.all { width: 160px; text-align: center; border-radius: 16px; background: #e7eefb; color: #2a66d0; font-weight: 500; }
.chart { width: 2448px; height: 500px; }
.axis { font-size: 24px; font-weight: 400; fill: #9e9e9e; }
.cat { font-size: 24px; font-weight: 400; fill: #212121; text-anchor: middle; }
.num { font-size: 40px; font-weight: 400; fill: #2f6ddd; text-anchor: middle; }
.actions { margin-top: 44px; height: 72px; display: flex; gap: 32px; }
.actions i { margin-right: auto; padding-top: 16px; line-height: 56px; font-weight: 400; color: #757575; letter-spacing: .1px; }
.actions .blue { width: 187px; }
.foot { flex: 1; background: #fafafa; display: flex; align-items: center; padding-left: 55px; font-size: 24px; font-weight: 400; color: #2f6ddd; }
.rep { width: 34px; height: 40px; margin-right: 15px; }
.foot u { text-underline-offset: 3px; }
.q { width: 26px; height: 26px; margin: 2px 0 0 11px; }
.shade { position: absolute; left: 0; right: 0; bottom: 0; height: 90px; background: linear-gradient(180deg, transparent, rgba(0,0,0,.035) 45%, rgba(0,0,0,.12)); mask-image: linear-gradient(90deg, #000 92%, transparent 99%); pointer-events: none; }

/* dock */
.dock { margin: 2px 0 0 118px; width: 3124px; height: 158px; flex: none; border-radius: 50px; border: 2px solid rgba(190,165,240,.55); padding: 20px 0 0 4px; display: flex;
  background: linear-gradient(90deg, #635890 0%, #625892 20%, #6b59ae 30%, #7158b8 42%, #7a5bc8 52%, #9160dc 62%, #9b61ec 70%, #9460ee 78%, #8459e8 88%, #7856c8 100%); }
.slot { position: relative; width: 135.880px; height: 134px; flex: none; padding-left: 16px; }
.slot svg { width: 104px; height: 104px; filter: drop-shadow(0 2px 3px rgba(0,0,0,.3)); }
.run::after { content: ""; position: absolute; left: 64px; bottom: 2px; width: 8px; height: 8px; border-radius: 50%; background: #0d0430; }
.badge { position: absolute; right: 0; top: -12px; width: 48px; height: 48px; border-radius: 50%; background: #e94e40; color: #fff; font: 400 26px/48px Inter, sans-serif; text-align: center; }
.div { width: 2px; height: 118px; margin: -2px 30px 0 29px; background: #5530a8; flex: none; }
.ws { font: 700 36px "Open Sans", sans-serif; fill: #fff; }
.cal-m { font: 600 20px Inter, sans-serif; fill: #fff; }
.cal-d { font: 300 64px Inter, sans-serif; fill: #222; }
.chip-t { font: 700 8px Inter, sans-serif; fill: #9a9a9a; }
.pl { font: 500 16px Inter, sans-serif; fill: #6a6a6e; }
```
